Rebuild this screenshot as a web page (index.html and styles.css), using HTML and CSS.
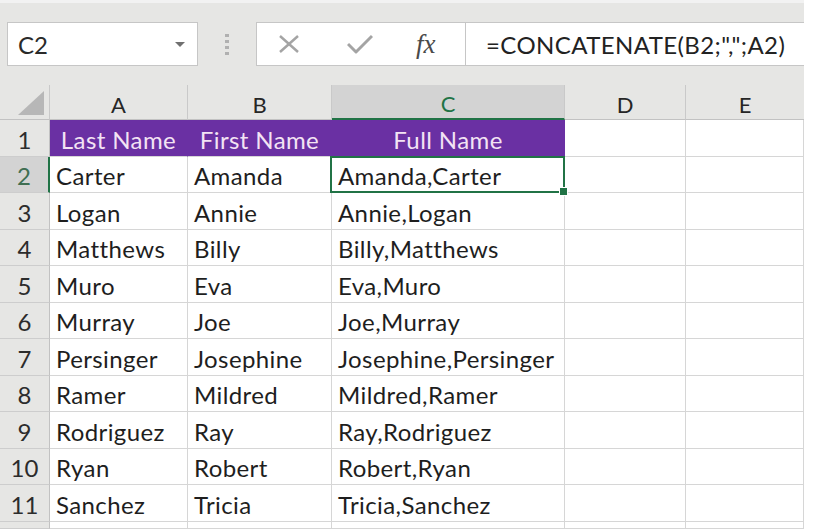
FILE: index.html
```html
<!DOCTYPE html>
<html lang="en">
<head>
    <meta charset="UTF-8">
    <title>Concatenate - Sheet</title>
    <link rel="stylesheet" href="styles.css">
</head>
<body>
    <div class="sheet">
        <!-- Name box + formula bar -->
        <div class="toolbar">
            <div class="name-box">
                <span>C2</span>
                <svg class="caret" width="10" height="6" viewBox="0 0 10 6"><polygon points="0,0 10,0 5,5" fill="#707070"></polygon></svg>
            </div>
            <div class="grip"><i></i><i></i><i></i><i></i></div>
            <div class="formula-btns">
                <svg width="22" height="18" viewBox="0 0 22 18" fill="none" stroke="#a4a4a4" stroke-width="2.4">
                    <path d="M2 1L20 17"></path>
                    <path d="M20 1L2 17"></path>
                </svg>
                <svg width="26" height="20" viewBox="0 0 26 20" fill="none" stroke="#a4a4a4" stroke-width="3" stroke-linejoin="round">
                    <path d="M1 10L9 18L25 2"></path>
                </svg>
                <span class="fx">fx</span>
            </div>
            <div class="formula-input">=CONCATENATE(B2;",";A2)</div>
        </div>

        <!-- Grid -->
        <div class="grid">
            <div class="corner">
                <svg width="26" height="24" viewBox="0 0 26 24"><polygon points="26,0 26,24 0,24" fill="#b7b7b7"></polygon></svg>
            </div>
            <div class="col-head">A</div>
            <div class="col-head">B</div>
            <div class="col-head active">C</div>
            <div class="col-head">D</div>
            <div class="col-head last">E</div>

            <div class="row-head">1</div>
            <div class="cell title">Last Name</div>
            <div class="cell title">First Name</div>
            <div class="cell title">Full Name</div>
            <div class="cell"></div>
            <div class="cell"></div>

            <div class="row-head active">2</div>
            <div class="cell">Carter</div>
            <div class="cell">Amanda</div>
            <div class="cell selected">Amanda,Carter</div>
            <div class="cell"></div>
            <div class="cell"></div>

            <div class="row-head">3</div>
            <div class="cell">Logan</div>
            <div class="cell">Annie</div>
            <div class="cell">Annie,Logan</div>
            <div class="cell"></div>
            <div class="cell"></div>

            <div class="row-head">4</div>
            <div class="cell">Matthews</div>
            <div class="cell">Billy</div>
            <div class="cell">Billy,Matthews</div>
            <div class="cell"></div>
            <div class="cell"></div>

            <div class="row-head">5</div>
            <div class="cell">Muro</div>
            <div class="cell">Eva</div>
            <div class="cell">Eva,Muro</div>
            <div class="cell"></div>
            <div class="cell"></div>

            <div class="row-head">6</div>
            <div class="cell">Murray</div>
            <div class="cell">Joe</div>
            <div class="cell">Joe,Murray</div>
            <div class="cell"></div>
            <div class="cell"></div>

            <div class="row-head">7</div>
            <div class="cell">Persinger</div>
            <div class="cell">Josephine</div>
            <div class="cell">Josephine,Persinger</div>
            <div class="cell"></div>
            <div class="cell"></div>

            <div class="row-head">8</div>
            <div class="cell">Ramer</div>
            <div class="cell">Mildred</div>
            <div class="cell">Mildred,Ramer</div>
            <div class="cell"></div>
            <div class="cell"></div>

            <div class="row-head">9</div>
            <div class="cell">Rodriguez</div>
            <div class="cell">Ray</div>
            <div class="cell">Ray,Rodriguez</div>
            <div class="cell"></div>
            <div class="cell"></div>

            <div class="row-head">10</div>
            <div class="cell">Ryan</div>
            <div class="cell">Robert</div>
            <div class="cell">Robert,Ryan</div>
            <div class="cell"></div>
            <div class="cell"></div>

            <div class="row-head">11</div>
            <div class="cell">Sanchez</div>
            <div class="cell">Tricia</div>
            <div class="cell">Tricia,Sanchez</div>
            <div class="cell"></div>
            <div class="cell"></div>

            <div class="row-head"></div>
            <div class="cell"></div>
            <div class="cell"></div>
            <div class="cell"></div>
            <div class="cell"></div>
            <div class="cell"></div>
        </div>
    </div>
</body>
</html>
```

FILE: styles.css
```css
* {
    margin: 0;
    padding: 0;
    box-sizing: border-box;
}

body {
    background-color: #ffffff;
    font-family: Lato, "Open Sans", sans-serif;
    color: #1e1e1e;
    height: 529px;
    overflow: hidden;
}

.sheet {
    width: 804px;
    height: 529px;
    overflow: hidden;
}

/* ---------- formula bar ---------- */

.toolbar {
    height: 85px;
    background-color: #e6e6e4;
    border-top: 3px solid #f2f2f2;
    padding-top: 19px;
    display: flex;
    align-items: flex-start;
}

.name-box {
    margin-left: 7px;
    width: 191px;
    height: 44px;
    background-color: #ffffff;
    border: 1px solid #c6c6c6;
    display: flex;
    align-items: center;
    justify-content: space-between;
    padding: 0 12px 0 10px;
    font-size: 24px;
    color: #2a2a2a;
}

.caret {
    margin-top: 2px;
}

.grip {
    width: 58px;
    height: 44px;
    display: flex;
    flex-direction: column;
    align-items: center;
    justify-content: center;
    gap: 3px;
}

.grip i {
    display: block;
    width: 4px;
    height: 3px;
    background-color: #b0b0b0;
}

.formula-btns {
    width: 209px;
    height: 44px;
    background-color: #ffffff;
    border: 1px solid #c6c6c6;
    border-right: none;
    display: flex;
    align-items: center;
    padding-left: 21px;
    gap: 47px;
}

.fx {
    font-family: "Liberation Serif", serif;
    font-style: italic;
    font-size: 27px;
    color: #4a4a4a;
    margin-left: -4px;
}

.formula-input {
    flex: 1;
    height: 44px;
    background-color: #ffffff;
    border: 1px solid #c6c6c6;
    border-right: none;
    padding-left: 20px;
    display: flex;
    align-items: center;
    font-size: 24px;
    letter-spacing: 0.4px;
    color: #222222;
    white-space: nowrap;
}

/* ---------- grid ---------- */

.grid {
    display: grid;
    grid-template-columns: 50px 138px 144px 233px 121px 118px;
    grid-template-rows: 35px repeat(11, 36.5px) 7.5px;
}

.corner {
    background-color: #e6e6e4;
    border-right: 1px solid #c9c9c9;
    border-bottom: 1px solid #c2c2c2;
    display: flex;
    align-items: flex-end;
    justify-content: flex-end;
    padding: 0 5px 4px 0;
}

.col-head {
    background-color: #e6e6e4;
    border-right: 1px solid #c9c9c9;
    border-bottom: 1px solid #c2c2c2;
    display: flex;
    align-items: center;
    justify-content: center;
    padding-top: 4px;
    font-size: 22px;
    color: #262626;
}

.col-head.last {
    border-right: none;
}

.col-head.active {
    background-color: #d3d3d3;
    border-bottom: 2px solid #217346;
    color: #217346;
}

.row-head {
    background-color: #e6e6e4;
    border-right: 1px solid #c2c2c2;
    border-bottom: 1px solid #cdcdcd;
    display: flex;
    align-items: center;
    justify-content: center;
    padding-top: 3px;
    font-size: 24px;
    color: #2c2c2c;
}

.row-head.active {
    background-color: #d3d3d3;
    border-right: 2px solid #217346;
    color: #3f6e52;
}

.cell {
    border-right: 1px solid #d6d6d6;
    border-bottom: 1px solid #d6d6d6;
    display: flex;
    align-items: center;
    padding: 3px 0 0 6px;
    font-size: 24px;
    letter-spacing: 0.4px;
    white-space: nowrap;
    position: relative;
}

.cell.title {
    background-color: #6a30a3;
    border-right-color: #6a30a3;
    color: #f3e3f4;
    justify-content: center;
    padding-left: 0;
}

.cell.selected::after {
    content: "";
    position: absolute;
    left: -2px;
    top: -1px;
    right: -1px;
    bottom: -1px;
    border: 2px solid #217346;
}

.cell.selected::before {
    content: "";
    position: absolute;
    right: -4px;
    bottom: -4px;
    width: 7px;
    height: 7px;
    background-color: #217346;
    border: 1px solid #ffffff;
    z-index: 1;
}
```
